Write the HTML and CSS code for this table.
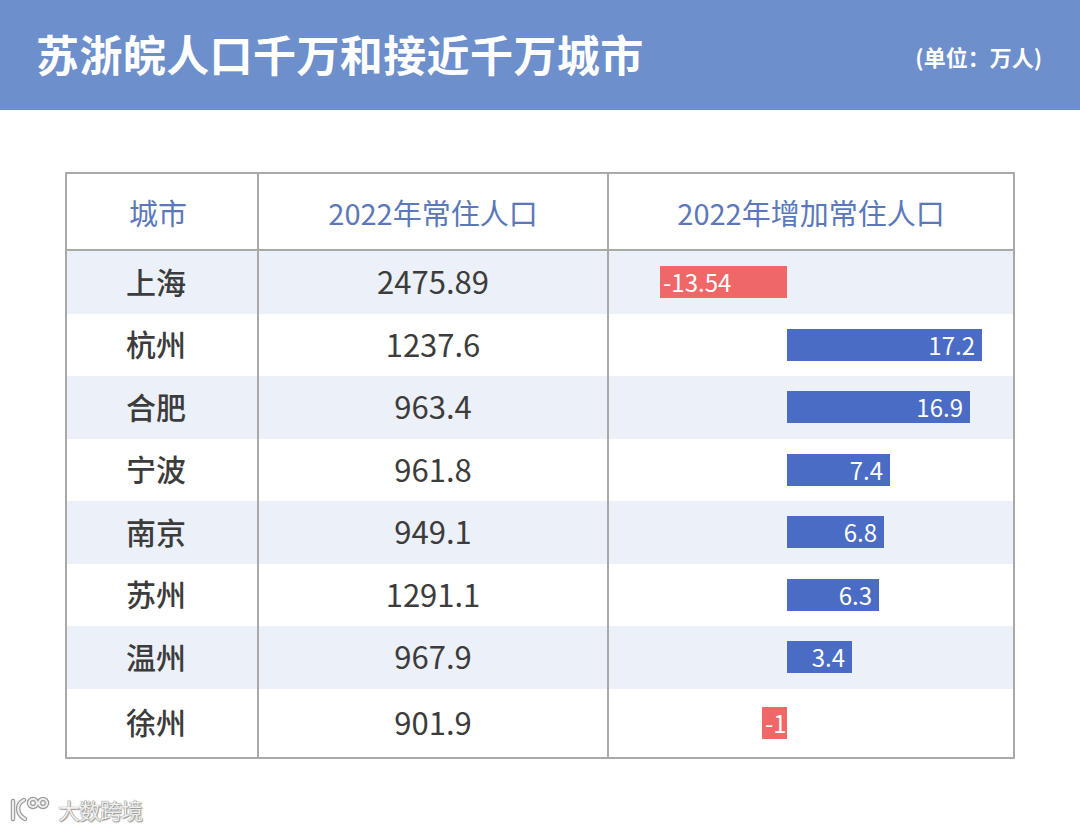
FILE: index.html
```html
<!DOCTYPE html>
<html lang="zh-CN">
<head>
<meta charset="utf-8">
<title>苏浙皖人口千万和接近千万城市</title>
<link rel="stylesheet" href="styles.css">
</head>
<body>
<header class="banner">
  <h1 class="title">苏浙皖人口千万和接近千万城市</h1>
  <span class="unit">(单位：万人)</span>
</header>

<main class="table-wrap">
  <div class="table">
    <div class="cell head first">城市</div>
    <div class="cell head sep">2022年常住人口</div>
    <div class="cell head sep">2022年增加常住人口</div>

    <div class="cell city shade">上海</div>
    <div class="cell num sep shade">2475.89</div>
    <div class="cell bars sep shade"><div class="bar neg" style="width:127px">-13.54</div></div>

    <div class="cell city">杭州</div>
    <div class="cell num sep">1237.6</div>
    <div class="cell bars sep"><div class="bar pos" style="width:195px">17.2</div></div>

    <div class="cell city shade">合肥</div>
    <div class="cell num sep shade">963.4</div>
    <div class="cell bars sep shade"><div class="bar pos" style="width:183px">16.9</div></div>

    <div class="cell city">宁波</div>
    <div class="cell num sep">961.8</div>
    <div class="cell bars sep"><div class="bar pos" style="width:103px">7.4</div></div>

    <div class="cell city shade">南京</div>
    <div class="cell num sep shade">949.1</div>
    <div class="cell bars sep shade"><div class="bar pos" style="width:97px">6.8</div></div>

    <div class="cell city">苏州</div>
    <div class="cell num sep">1291.1</div>
    <div class="cell bars sep"><div class="bar pos" style="width:92px">6.3</div></div>

    <div class="cell city shade">温州</div>
    <div class="cell num sep shade">967.9</div>
    <div class="cell bars sep shade"><div class="bar pos" style="width:65px">3.4</div></div>

    <div class="cell city">徐州</div>
    <div class="cell num sep">901.9</div>
    <div class="cell bars sep"><div class="bar neg" style="width:25px">-1</div></div>
  </div>
</main>

<footer class="watermark">
  <svg class="wm-logo" width="44" height="28" viewBox="0 0 44 28" aria-hidden="true">
    <g fill="none" stroke="#9a9a9a" stroke-width="4.5" stroke-linecap="round" stroke-linejoin="round">
      <path d="M5 6 L5 24"/>
      <path d="M16 5 C8 9 8 19 17 24"/>
      <circle cx="25" cy="8" r="4"/>
      <circle cx="35" cy="8" r="4"/>
    </g>
    <g fill="none" stroke="#eeeeee" stroke-width="2.2" stroke-linecap="round" stroke-linejoin="round">
      <path d="M5 6 L5 24"/>
      <path d="M16 5 C8 9 8 19 17 24"/>
      <circle cx="25" cy="8" r="4"/>
      <circle cx="35" cy="8" r="4"/>
    </g>
  </svg>
  <span class="wm-text">大数跨境</span>
</footer>
</body>
</html>
```

FILE: styles.css
```css
html, body {
  margin: 0;
  padding: 0;
  background: #ffffff;
}

body {
  font-family: "Noto Sans CJK SC", "Noto Sans", sans-serif;
  width: 1080px;
  height: 829px;
  overflow: hidden;
}

.banner {
  height: 110px;
  background: #6d8fcb;
  display: flex;
  align-items: center;
  justify-content: space-between;
  padding: 0 38px 0 36px;
  box-sizing: border-box;
}

.title {
  margin: 0;
  color: #ffffff;
  font-size: 43px;
  font-weight: 700;
  letter-spacing: 0.4px;
  line-height: 1;
  position: relative;
  top: -2px;
}

.unit {
  color: #ffffff;
  font-size: 22px;
  font-weight: 700;
  line-height: 1;
  margin-top: 2px;
}

.table-wrap {
  padding: 62px 0 0 65px;
}

.table {
  width: 950px;
  box-sizing: border-box;
  border: 2px solid #a9a9a9;
  display: grid;
  grid-template-columns: 190px 350px 406px;
  grid-template-rows: 77px repeat(7, 62.5px) 68px;
  background: #ffffff;
}

.cell {
  display: flex;
  align-items: center;
  justify-content: center;
  box-sizing: border-box;
}

.sep {
  border-left: 2px solid #a9a9a9;
}

.head {
  border-bottom: 2px solid #a9a9a9;
  color: #5b78bb;
  font-size: 29px;
  font-weight: 400;
  padding-top: 1px;
}

.head.first {
  padding-right: 8px;
}

.shade {
  background: #ebf0f9;
}

.city {
  color: #3c3c3c;
  font-size: 30px;
  font-weight: 500;
  padding: 0 12px 3px 0;
}

.num {
  color: #3c3c3c;
  font-size: 31px;
  font-weight: 400;
  padding-bottom: 3px;
}

.bars {
  display: grid;
  grid-template-columns: 178px 1fr;
  align-items: center;
}

.bar {
  height: 32px;
  box-sizing: border-box;
  color: #ffffff;
  font-size: 24px;
  line-height: 32px;
  white-space: nowrap;
}

.bar.neg {
  grid-column: 1;
  justify-self: end;
  background: #f06767;
  padding-left: 3px;
  text-align: left;
}

.bar.pos {
  grid-column: 2;
  justify-self: start;
  background: #4a6cc5;
  padding-right: 7px;
  text-align: right;
}

.watermark {
  display: flex;
  align-items: center;
  gap: 6px;
  padding: 34px 0 0 8px;
}

.wm-text {
  font-size: 22px;
  font-weight: 400;
  color: #efefef;
  text-shadow: 0 0 1px #8a8a8a, 0 0 1px #8a8a8a, 1px 1px 1px #9a9a9a;
  letter-spacing: -1px;
}
```
